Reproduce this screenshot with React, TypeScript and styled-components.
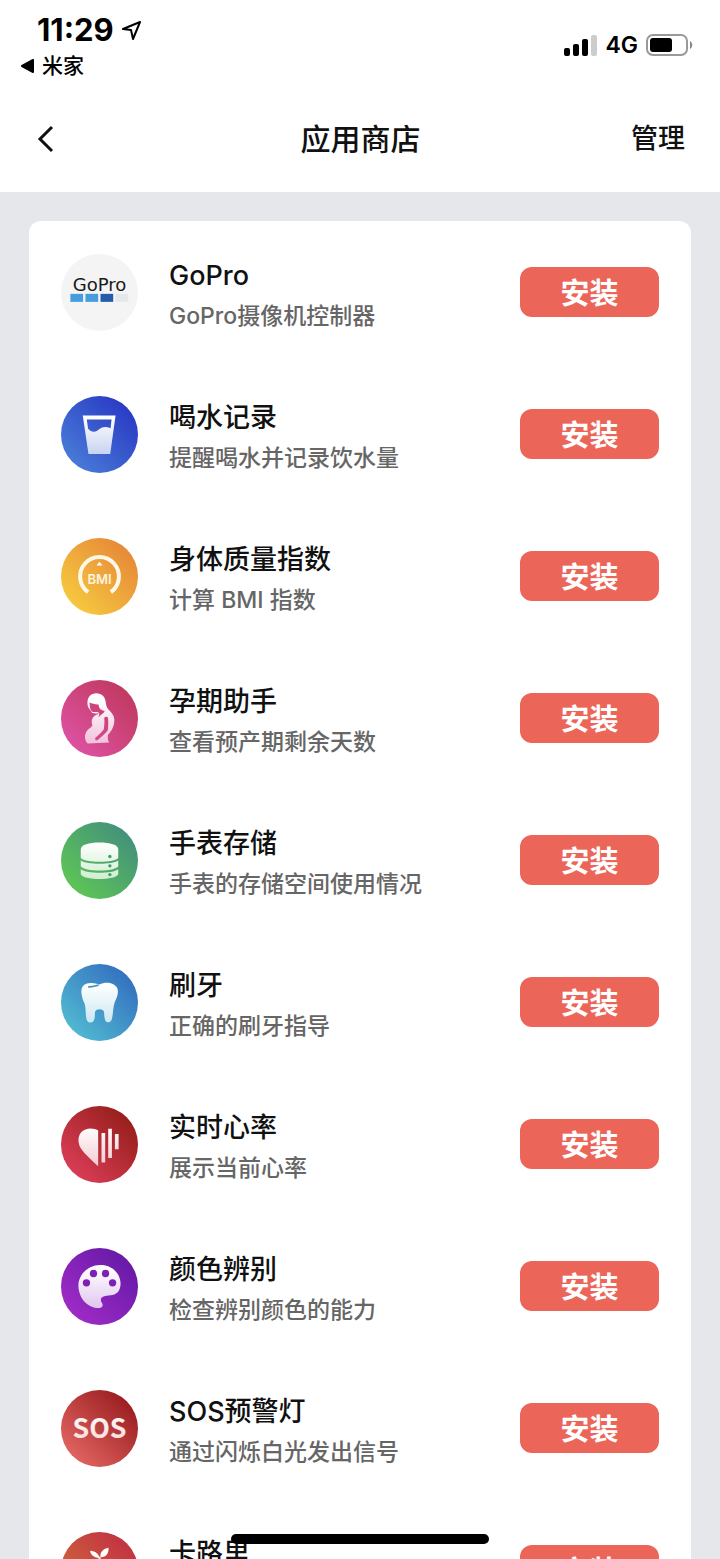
import React from 'react';
import styled, { createGlobalStyle } from 'styled-components';

const GlobalStyle = createGlobalStyle`
  * { box-sizing: border-box; }
  body { margin: 0; background: #e6e7eb; }
  button { font-family: inherit; border: 0; padding: 0; background: none; cursor: pointer; }
`;

const Screen = styled.div`
  position: relative;
  display: flex;
  flex-direction: column;
  height: 100vh;
  overflow: hidden;
  color: #111;
  background: #e6e7eb;
  font-family: Inter, 'Noto Sans CJK SC', sans-serif;
`;

const StatusBar = styled.div`
  display: flex;
  justify-content: space-between;
  flex: none;
  height: 84px;
  padding: 14px 27px 0 20px;
  background: #fff;
  color: #000;
`;

const StatusLeft = styled.div`
  display: flex;
  flex-direction: column;
`;

const Clock = styled.div`
  display: flex;
  align-items: center;
  gap: 7px;
  padding-left: 17px;
  font-size: 31px;
  font-weight: 700;
  line-height: 32px;
`;

const BackToApp = styled.a`
  display: flex;
  align-items: center;
  gap: 7px;
  color: inherit;
  text-decoration: none;
  font-size: 21px;
  font-weight: 500;
  line-height: 40px;
`;

const StatusRight = styled.div`
  display: flex;
  align-items: center;
  gap: 8px;
  height: 32px;
  margin-top: 15px;
  font-size: 23px;
  font-weight: 600;
`;

const Header = styled.header`
  display: grid;
  grid-template-columns: 1fr auto 1fr;
  align-items: center;
  flex: none;
  height: 108px;
  padding: 2px 35px 0 36px;
  background: #fff;
`;

const BackButton = styled.button`
  display: flex;
  justify-self: start;
  color: #111;
`;

const PageTitle = styled.h1`
  margin: 0;
  font-size: 30px;
  font-weight: 500;
  line-height: 44px;
`;

const ManageButton = styled.button`
  justify-self: end;
  color: #111;
  font-size: 27px;
  font-weight: 500;
  line-height: 40px;
`;

const Content = styled.main`
  flex: 1;
  min-height: 0;
  overflow-y: auto;
  scrollbar-width: none;
  padding: 29px;
`;

const AppList = styled.ul`
  margin: 0;
  padding: 0;
  list-style: none;
  border-radius: 12px;
  background: #fff;
`;

const AppRow = styled.li`
  display: flex;
  align-items: center;
  gap: 31px;
  height: 142px;
  padding: 0 32px;
`;

const AppIcon = styled.svg`
  flex: none;
  width: 77px;
  height: 77px;
`;

const AppText = styled.div`
  flex: 1;
  min-width: 0;
  padding-top: 8px;
`;

const AppName = styled.h2`
  margin: 0;
  font-size: 27px;
  font-weight: 500;
  line-height: 40px;
`;

const AppNote = styled.p`
  margin: 0;
  color: #666;
  font-size: 23px;
  font-weight: 500;
  line-height: 40px;
`;

const InstallButton = styled.button`
  flex: none;
  width: 139px;
  height: 50px;
  padding-top: 4px;
  border-radius: 12px;
  background: #ec6559;
  color: #fff;
  font-size: 29px;
  font-weight: 700;
  line-height: 46px;
`;

const HomeIndicator = styled.div`
  position: absolute;
  bottom: 15px;
  left: 50%;
  width: 258px;
  height: 10px;
  border-radius: 5px;
  background: #000;
  transform: translateX(-50%);
`;

type IconProps = { id: string; from: string; to: string; tint?: string; children: React.ReactNode };

function Disc({ id, from, to, tint = '#fff', children }: IconProps) {
  return (
    <AppIcon viewBox="0 0 230 230" aria-hidden="true">
      <defs>
        <linearGradient id={`${id}-bg`} x1="0.15" y1="0.85" x2="0.85" y2="0.15">
          <stop offset="0" stopColor={from} />
          <stop offset="1" stopColor={to} />
        </linearGradient>
        <linearGradient id={`${id}-fg`} gradientUnits="userSpaceOnUse" x1="0" y1="60" x2="0" y2="185">
          <stop offset="0" stopColor="#fff" />
          <stop offset="1" stopColor={tint} />
        </linearGradient>
      </defs>
      <circle cx="115" cy="115" r="115" fill={`url(#${id}-bg)`} />
      <g fill={`url(#${id}-fg)`}>{children}</g>
    </AppIcon>
  );
}

const apps = [
  {
    name: 'GoPro',
    note: 'GoPro摄像机控制器',
    icon: (
      <Disc id="gopro" from="#f4f4f4" to="#f4f4f4">
        <text x="115" y="112" fill="#1a1a1a" fontFamily="'DejaVu Sans', sans-serif" fontSize="54" textAnchor="middle">GoPro</text>
        <path d="M28 119h38v24H28z" fill="#459ddb" />
        <path d="M73 119h38v24H73z" fill="#459ddb" />
        <path d="M118 119h38v24h-38z" fill="#265dab" />
        <path d="M163 119h38v24h-38z" fill="#e6e7ea" />
      </Disc>
    ),
  },
  {
    name: '喝水记录',
    note: '提醒喝水并记录饮水量',
    icon: (
      <Disc id="water" from="#4779d6" to="#2b3cc5" tint="#c3cff1">
        <path fillRule="evenodd" d="M65 58H163L147 173H82ZM77 70L81 98C90 108 99 110 109 103C122 92 132 90 148 96L151 70Z" />
      </Disc>
    ),
  },
  {
    name: '身体质量指数',
    note: '计算 BMI 指数',
    icon: (
      <Disc id="bmi" from="#f6c73f" to="#e78a38" tint="#fff1d8">
        <path d="M81 162A58 58 0 1 1 149 162" fill="none" stroke="#fff8e8" strokeWidth="12" />
        <path d="M115 71L124 82H106Z" />
        <text x="115" y="138" fill="#fff4de" fontSize="39" fontWeight="600" textAnchor="middle">BMI</text>
      </Disc>
    ),
  },
  {
    name: '孕期助手',
    note: '查看预产期剩余天数',
    icon: (
      <Disc id="pregnancy" from="#dc519f" to="#c13a62" tint="#f2c4dc">
        <path
          fillRule="evenodd"
          d="M79 72C78 49 91 38 110 40C129 42 133 57 135 74C137 91 155 94 159 115C161 137 151 153 140 164C139 173 140 180 144 187L80 190C69 179 69 161 79 150C85 143 92 141 94 135C90 124 91 112 103 105C107 103 111 103 112 99C100 101 91 99 90 93C83 86 80 80 79 72ZM85 67C87 78 85 88 94 95C102 97 108 93 113 98C116 102 113 106 112 111C119 103 127 101 131 92C120 91 113 86 112 73C103 74 93 70 85 67ZM129 114C131 122 129 136 128 147C120 158 111 166 102 173L103 180L109 180C120 170 133 160 140 150C141 137 142 124 140 112C137 108 131 109 129 114Z"
        />
      </Disc>
    ),
  },
  {
    name: '手表存储',
    note: '手表的存储空间使用情况',
    icon: (
      <Disc id="storage" from="#5dc457" to="#44927a" tint="#c9edca">
        <path d="M59 82C59 67 84 61 115 61S171 67 171 82V107C163 123 67 123 59 107Z" />
        <path d="M59 115C76 128 154 128 171 115V132C163 149 67 149 59 132Z" />
        <path d="M59 141C76 155 154 155 171 141V156C164 175 66 175 59 156Z" />
        <g fill="#3f9f68">
          <circle cx="146" cy="103" r="5" />
          <circle cx="146" cy="131" r="5" />
          <circle cx="146" cy="157" r="5" />
        </g>
      </Disc>
    ),
  },
  {
    name: '刷牙',
    note: '正确的刷牙指导',
    icon: (
      <Disc id="teeth" from="#50b7d1" to="#3572c0" tint="#c6e6f0">
        <path d="M61 86C59 65 73 56 91 57C100 57 107 60 115 61C132 53 158 54 168 72C173 85 168 99 161 113C154 131 157 151 151 167C147 176 136 177 132 168C128 157 130 148 128 142C124 133 106 133 102 142C100 151 103 162 97 170C92 177 80 176 77 167C72 151 76 130 69 115C64 105 62 96 61 86Z" />
        <path d="M81 68C94 70 103 65 112 63" fill="none" stroke="#408dc4" strokeWidth="5" />
      </Disc>
    ),
  },
  {
    name: '实时心率',
    note: '展示当前心率',
    icon: (
      <Disc id="heart" from="#d83c55" to="#98201c" tint="#f3c8d0">
        <path d="M111 73V180C89 160 72 145 60 128C46 106 51 77 73 70C87 65 101 68 111 73Z" />
        <path d="M121 81h11v88h-11zM141 68h11v87h-11zM161 84h11v45h-11z" />
      </Disc>
    ),
  },
  {
    name: '颜色辨别',
    note: '检查辨别颜色的能力',
    icon: (
      <Disc id="palette" from="#9d2bc5" to="#681aa8" tint="#dfc3ee">
        <path d="M116 51C153 50 178 76 178 108C177 130 164 140 148 141C132 142 119 145 119 155C119 163 126 164 124 173C119 184 98 179 87 173C64 161 52 137 52 111C53 78 81 52 116 51Z" />
        <g fill="#7d20b4">
          <circle cx="76" cy="104" r="11" />
          <circle cx="97" cy="76" r="11" />
          <circle cx="133" cy="76" r="11" />
          <circle cx="154" cy="104" r="11" />
        </g>
      </Disc>
    ),
  },
  {
    name: 'SOS预警灯',
    note: '通过闪烁白光发出信号',
    icon: (
      <Disc id="sos" from="#e0625f" to="#9c2023" tint="#f5d0d0">
        <text x="115" y="144" fontFamily="'Noto Sans CJK SC', sans-serif" fontSize="80" fontWeight="700" textAnchor="middle">SOS</text>
      </Disc>
    ),
  },
  {
    name: '卡路里',
    note: '计算食物的热量',
    icon: (
      <Disc id="calorie" from="#cf6a3c" to="#c23442" tint="#f8dcd4">
        <path d="M115 78C95 76 88 66 87 56C103 57 113 65 115 78ZM118 75C115 61 127 49 142 47C143 65 134 76 118 75Z" />
        <path d="M112 74h6v18h-6z" />
        <path d="M115 90C137 78 163 89 163 121C163 153 143 180 115 173C87 180 67 153 67 121C67 89 93 78 115 90Z" />
      </Disc>
    ),
  },
];

export default function App() {
  return (
    <Screen>
      <GlobalStyle />
      <StatusBar>
        <StatusLeft>
          <Clock>
            11:29
            <svg width="21" height="21" viewBox="0 0 21 21" fill="none" stroke="#000" strokeWidth="2" strokeLinejoin="round" aria-hidden="true">
              <path d="M19 2L2 9L10 10L12 19Z" />
            </svg>
          </Clock>
          <BackToApp href="#">
            <svg width="15" height="14" viewBox="0 0 15 14" aria-hidden="true">
              <path d="M2 7L13 1V13Z" stroke="#000" strokeWidth="2" strokeLinejoin="round" />
            </svg>
            米家
          </BackToApp>
        </StatusLeft>
        <StatusRight>
          <svg width="33" height="21" viewBox="0 0 33 21" aria-hidden="true">
            <rect x="0" y="13" width="6" height="8" rx="2" />
            <rect x="9" y="9" width="6" height="12" rx="2" />
            <rect x="18" y="4" width="6" height="17" rx="2" />
            <rect x="27" y="0" width="6" height="21" rx="2" fill="#ccc" />
          </svg>
          4G
          <svg width="47" height="22" viewBox="0 0 47 22" aria-hidden="true">
            <rect x="1" y="1" width="40" height="20" rx="6" fill="none" stroke="#999" strokeWidth="2" />
            <rect x="4" y="4" width="22" height="14" rx="3" />
            <path d="M44 7C47 9 47 13 44 15Z" fill="#888" />
          </svg>
        </StatusRight>
      </StatusBar>
      <Header>
        <BackButton aria-label="返回">
          <svg width="20" height="28" viewBox="0 0 20 28" fill="none" stroke="currentColor" strokeWidth="3" aria-hidden="true">
            <path d="M16 2L4 14L16 26" />
          </svg>
        </BackButton>
        <PageTitle>应用商店</PageTitle>
        <ManageButton>管理</ManageButton>
      </Header>
      <Content>
        <AppList>
          {apps.map((app) => (
            <AppRow key={app.name}>
              {app.icon}
              <AppText>
                <AppName>{app.name}</AppName>
                <AppNote>{app.note}</AppNote>
              </AppText>
              <InstallButton aria-label={`安装 ${app.name}`}>安装</InstallButton>
            </AppRow>
          ))}
        </AppList>
      </Content>
      <HomeIndicator />
    </Screen>
  );
}
